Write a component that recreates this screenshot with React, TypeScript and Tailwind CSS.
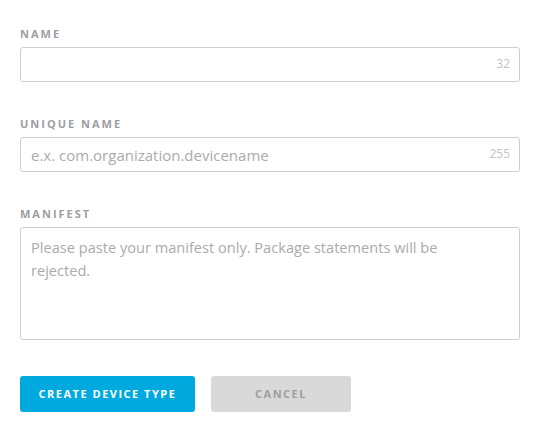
import React from "react";

const font = { fontFamily: '"Open Sans", "Noto Sans", sans-serif' };

function Label({ children }: { children: React.ReactNode }) {
  return (
    <div className="text-[11px] font-bold tracking-[2px] text-[#9b9ea2] leading-[14px] mb-[6px]">
      {children}
    </div>
  );
}

export default function App() {
  return (
    <div className="bg-white w-[533px] h-[439px] px-[20px] pt-[27px]" style={font}>
      <div className="w-[500px]">
        <Label>NAME</Label>
        <div className="relative">
          <input
            className="w-full h-[35px] border border-[#cfcfcf] rounded-[3px] px-[10px] text-[15px] text-[#555] placeholder:text-[#ababab] outline-none"
          />
          <span className="absolute right-[10px] top-[8px] text-[12px] text-[#c2c2c2]">32</span>
        </div>

        <div className="mt-[35px]">
          <Label>UNIQUE NAME</Label>
          <div className="relative">
            <input
              placeholder="e.x. com.organization.devicename"
              className="w-full h-[35px] border border-[#cfcfcf] rounded-[3px] px-[10px] text-[15px] text-[#555] placeholder:text-[#ababab] outline-none"
            />
            <span className="absolute right-[10px] top-[8px] text-[12px] text-[#c2c2c2]">255</span>
          </div>
        </div>

        <div className="mt-[35px]">
          <Label>MANIFEST</Label>
          <textarea
            placeholder={"Please paste your manifest only. Package statements will be\nrejected."}
            className="block w-full h-[113px] border border-[#cfcfcf] rounded-[3px] px-[10px] py-[8px] text-[14.6px] leading-[23px] text-[#555] placeholder:text-[#ababab] outline-none resize-none"
          />
        </div>

        <div className="flex gap-[16px] mt-[36px]">
          <button className="w-[175px] h-[36px] rounded-[3px] bg-[#00aadf] text-white text-[11px] font-bold tracking-[1.5px]">
            CREATE DEVICE TYPE
          </button>
          <button className="w-[140px] h-[36px] rounded-[3px] bg-[#d9d9d9] text-[#9b9ea2] text-[11px] font-bold tracking-[1.5px]">
            CANCEL
          </button>
        </div>
      </div>
    </div>
  );
}
